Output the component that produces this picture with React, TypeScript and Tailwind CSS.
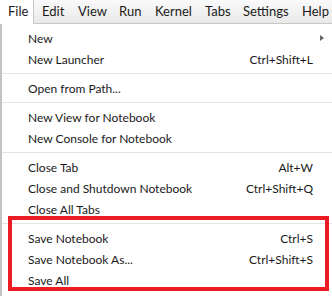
const menuBar: [string, string][] = [
  ["File", "w-[34px]"],
  ["Edit", "w-[36px]"],
  ["View", "w-[41px]"],
  ["Run", "w-[36px]"],
  ["Kernel", "w-[50px]"],
  ["Tabs", "w-[38px]"],
  ["Settings", "w-[59px]"],
  ["Help", "w-[38px]"],
];

type Item = { label: string; shortcut?: string; submenu?: boolean } | "sep";

const items: Item[] = [
  { label: "New", submenu: true },
  { label: "New Launcher", shortcut: "Ctrl+Shift+L" },
  "sep",
  { label: "Open from Path..." },
  "sep",
  { label: "New View for Notebook" },
  { label: "New Console for Notebook" },
  "sep",
  { label: "Close Tab", shortcut: "Alt+W" },
  { label: "Close and Shutdown Notebook", shortcut: "Ctrl+Shift+Q" },
  { label: "Close All Tabs" },
  "sep",
  { label: "Save Notebook", shortcut: "Ctrl+S" },
  { label: "Save Notebook As...", shortcut: "Ctrl+Shift+S" },
  { label: "Save All" },
];

export default function App() {
  return (
    <div
      className="relative w-[332px] h-[296px] overflow-hidden bg-white text-[#1a1a1a]"
      style={{ fontFamily: 'Lato, "Noto Sans", sans-serif' }}
    >
      {/* top menu bar */}
      <div className="flex h-[24px] border-b border-[#c8c8c8] bg-gradient-to-b from-[#fafafa] to-[#e9e9e9] text-[13px]">
        {menuBar.map(([m, w], i) => (
          <div
            key={m}
            className={
              i === 0
                ? `${w} shrink-0 h-[24px] pl-[8px] flex items-center bg-white border-r border-[#c8c8c8] -mb-px`
                : `${w} shrink-0 pl-[8px] flex items-center whitespace-nowrap`
            }
          >
            {m}
          </div>
        ))}
      </div>

      {/* dropdown */}
      <div className="border-l-2 border-[#c4c4c4] pt-[4px] h-[272px] text-[12px]">
        {items.map((it, i) =>
          it === "sep" ? (
            <div key={i} className="pt-[3px] pb-[4px]">
              <div className="h-px bg-[#e3e3e3]" />
            </div>
          ) : (
            <div key={i} className="h-[21px] flex items-center justify-between pl-[26px] pr-[19px] relative">
              <span>{it.label}</span>
              {it.shortcut && <span>{it.shortcut}</span>}
              {it.submenu && (
                <span className="absolute right-[8px] top-[7px] w-0 h-0 border-y-[3.5px] border-y-transparent border-l-[4px] border-l-[#666]" />
              )}
            </div>
          )
        )}
      </div>

      {/* highlight box */}
      <div className="absolute left-[8px] top-[216px] w-[321px] h-[75px] border-[4px] border-[#ec1c24]" />
    </div>
  );
}
